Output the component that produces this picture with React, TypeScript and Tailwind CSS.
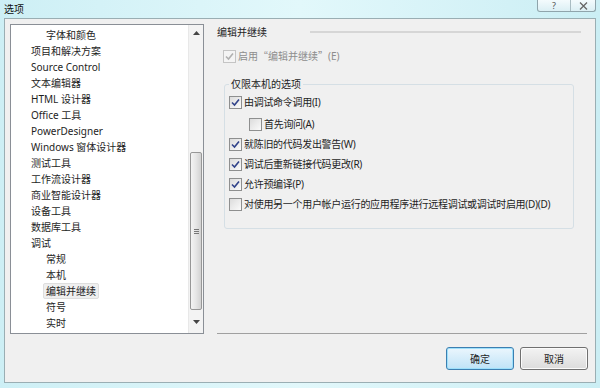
import React from "react";

type Item = { label: string; indent?: boolean; selected?: boolean };

const ITEMS: Item[] = [
  { label: "字体和颜色", indent: true },
  { label: "项目和解决方案" },
  { label: "Source Control" },
  { label: "文本编辑器" },
  { label: "HTML 设计器" },
  { label: "Office 工具" },
  { label: "PowerDesigner" },
  { label: "Windows 窗体设计器" },
  { label: "测试工具" },
  { label: "工作流设计器" },
  { label: "商业智能设计器" },
  { label: "设备工具" },
  { label: "数据库工具" },
  { label: "调试" },
  { label: "常规", indent: true },
  { label: "本机", indent: true },
  { label: "编辑并继续", indent: true, selected: true },
  { label: "符号", indent: true },
  { label: "实时", indent: true },
];

function Check({ checked, disabled }: { checked?: boolean; disabled?: boolean }) {
  return (
    <span
      className={`flex h-[13px] w-[13px] shrink-0 items-center justify-center border ${
        disabled ? "border-[#c4c4c4] bg-[#f4f4f4]" : "border-[#8e8f8f] bg-gradient-to-br from-[#dcdcdc] to-[#fbfbfb]"
      }`}
    >
      {checked && (
        <svg width="9" height="9" viewBox="0 0 9 9">
          <path
            d="M1 4.5 L3.5 7 L8 1.5"
            fill="none"
            stroke={disabled ? "#b0b0b0" : "#31438a"}
            strokeWidth="1.6"
          />
        </svg>
      )}
    </span>
  );
}

function CheckRow({
  label,
  checked,
  disabled,
  className = "",
}: {
  label: React.ReactNode;
  checked?: boolean;
  disabled?: boolean;
  className?: string;
}) {
  return (
    <div className={`flex h-[16px] items-center gap-[2px] whitespace-nowrap ${className}`}>
      <Check checked={checked} disabled={disabled} />
      <span className={disabled ? "text-[#8d8d8d]" : "text-[#1e1e1e]"}>{label}</span>
    </div>
  );
}

const cjk = { fontFamily: '"Noto Sans CJK SC", sans-serif' };

export default function App() {
  return (
    <div
      className="flex h-[388px] w-[600px] flex-col overflow-hidden bg-gradient-to-r from-[#cdeff5] via-[#e2f8fb] to-[#cbeef4] text-[10px] leading-[16px] text-[#1e1e1e]"
      style={{ fontFamily: '"Noto Sans", "Noto Sans CJK SC", sans-serif' }}
    >
      {/* title bar */}
      <div className="flex h-[18px] shrink-0 items-start">
        <span className="pl-[4px] pt-[1px] text-[10px] text-[#111]">选项</span>
        <div className="ml-auto mr-[4px] flex h-[12px] overflow-hidden rounded-b-[3px] border border-t-0 border-[#8fa4ab] bg-gradient-to-b from-[#f4fbfd] to-[#dbeff4]">
          <div className="flex w-[33px] items-center justify-center border-r border-[#a9bcc2] text-[9px] leading-none text-[#555]">
            ?
          </div>
          <div className="flex w-[24px] items-center justify-center">
            <svg width="9" height="8" viewBox="0 0 9 8">
              <path d="M1 0.5 L8 7.5 M8 0.5 L1 7.5" stroke="#666" strokeWidth="1.3" />
            </svg>
          </div>
        </div>
      </div>

      {/* main panel */}
      <div className="mx-[4px] mb-[5px] flex flex-1 flex-col border border-[#9aaeb3] bg-[#f0f0f0]">
        <div className="flex pl-[5px] pt-[5px]">
          {/* tree list */}
          <div className="flex h-[310px] w-[194px] border border-[#8a8f96] bg-white">
            <div className="flex-1 overflow-hidden pt-[2px]">
              {ITEMS.map((it) => (
                <div key={it.label} className={`flex h-[16px] items-center ${it.indent ? "pl-[35px]" : "pl-[20px]"}`}>
                  <span
                    className={
                      it.selected
                        ? "-ml-[3px] rounded-[2px] border border-[#dedede] bg-[#efefef] px-[2px] leading-[14px]"
                        : ""
                    }
                  >
                    {it.label}
                  </span>
                </div>
              ))}
            </div>
            {/* scrollbar */}
            <div className="flex w-[15px] flex-col border-l border-[#e8e8e8] bg-[#f3f3f3]">
              <div className="flex h-[16px] items-center justify-center">
                <svg width="7" height="4" viewBox="0 0 7 4">
                  <path d="M0 4 L3.5 0 L7 4 Z" fill="#444" />
                </svg>
              </div>
              <div className="h-[111px]" />
              <div className="mx-[1px] flex h-[158px] items-center justify-center rounded-[2px] border border-[#979797] bg-gradient-to-r from-[#f4f4f4] via-[#e6e6e6] to-[#d2d2d2]">
                <div className="flex flex-col gap-[1px]">
                  <span className="h-px w-[5px] bg-[#777]" />
                  <span className="h-px w-[5px] bg-[#777]" />
                  <span className="h-px w-[5px] bg-[#777]" />
                </div>
              </div>
              <div className="flex flex-1 items-center justify-center">
                <svg width="7" height="4" viewBox="0 0 7 4">
                  <path d="M0 0 L3.5 4 L7 0 Z" fill="#444" />
                </svg>
              </div>
            </div>
          </div>

          {/* right side */}
          <div className="ml-[13px] mr-[8px] flex h-[310px] flex-1 flex-col">
            <div className="flex h-[16px] items-center">
              <span className="w-[93px] shrink-0">编辑并继续</span>
              <span className="mr-[6px] h-[2px] flex-1 bg-[#d6d6d6]" />
            </div>
            <CheckRow
              className="ml-[6px] mt-[8px]"
              label={
                <>
                  启用<span style={cjk}>“</span>编辑并继续<span style={cjk}>”</span>(E)
                </>
              }
              checked
              disabled
            />

            <fieldset className="ml-[7px] mr-[13px] mt-[13px] h-[152px] rounded-[3px] border border-[#d5dfe5] pb-0 pl-[4px] pt-[3px] tracking-[-0.3px]">
              <legend className="px-[2px] leading-[14px] tracking-normal">仅限本机的选项</legend>
              <CheckRow label="由调试命令调用(I)" checked />
              <CheckRow className="ml-[20px] mt-[6px]" label="首先询问(A)" />
              <CheckRow className="mt-[4px]" label="就陈旧的代码发出警告(W)" checked />
              <CheckRow className="mt-[4px]" label="调试后重新链接代码更改(R)" checked />
              <CheckRow className="mt-[4px]" label="允许预编译(P)" checked />
              <CheckRow
                className="mt-[4px]"
                label="对使用另一个用户帐户运行的应用程序进行远程调试或调试时启用(D)(D)"
              />
            </fieldset>

            <div className="mt-auto h-px bg-[#a0a0a0]" />
          </div>
        </div>

        {/* buttons */}
        <div className="mr-[7px] mt-[13px] flex justify-end gap-[6px]">
          <button className="h-[23px] w-[68px] rounded-[3px] border border-[#3c7fb1] bg-gradient-to-b from-[#ebf6fd] to-[#bfe3f7] text-[10px] shadow-[inset_0_0_0_1px_#9ee0fb]">
            确定
          </button>
          <button className="h-[23px] w-[68px] rounded-[3px] border border-[#707070] bg-gradient-to-b from-[#f3f3f3] to-[#dcdcdc] text-[10px] shadow-[inset_0_0_0_1px_#fbfbfb]">
            取消
          </button>
        </div>
      </div>
    </div>
  );
}
